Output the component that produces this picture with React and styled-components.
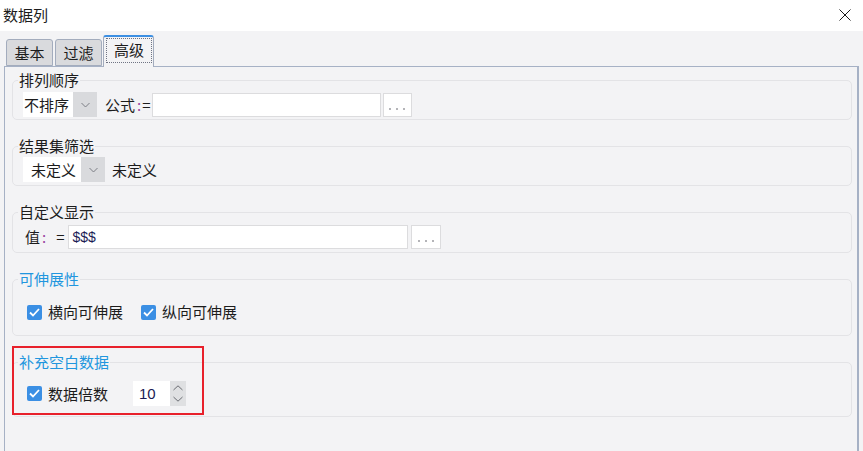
import React from 'react';
import styled, { createGlobalStyle } from 'styled-components';

const GlobalStyle = createGlobalStyle`
  html, body {
    margin: 0;
    padding: 0;
  }
  body {
    background: #f3f3f5;
    font-family: "Noto Sans CJK SC", "Noto Sans", sans-serif;
    font-size: 15px;
    color: #1c1c1c;
  }
`;

const Window = styled.div`
  width: 863px;
  height: 451px;
  overflow: hidden;
  display: flex;
  flex-direction: column;
  background: #f3f3f5;
`;

const TitleBar = styled.div`
  height: 31px;
  flex: none;
  background: #ffffff;
  display: flex;
  align-items: center;
  justify-content: space-between;
  padding: 0 12px 2px 3px;
  box-sizing: border-box;
  line-height: 20px;
`;

const CloseButton = styled.div`
  width: 12px;
  height: 12px;
  display: flex;
`;

const Content = styled.div`
  flex: 1;
  min-height: 0;
  display: flex;
  flex-direction: column;
  padding: 0 4px;
`;

const TabStrip = styled.div`
  height: 36px;
  flex: none;
  display: flex;
  align-items: flex-end;
  gap: 2px;
  padding-left: 2px;
  margin-bottom: -1px;
  position: relative;
  z-index: 1;
`;

const Tab = styled.div`
  box-sizing: border-box;
  width: ${p => (p.$active ? '51px' : '47px')};
  height: ${p => (p.$active ? '32px' : '27px')};
  margin-bottom: ${p => (p.$active ? '0' : '1px')};
  margin-left: ${p => (p.$active ? '-1px' : '0')};
  border: 1px solid #a3acbd;
  border-top: ${p => (p.$active ? '2px solid #3c8fe3' : '1px solid #a3acbd')};
  border-bottom: ${p => (p.$active ? 'none' : '1px solid #a3acbd')};
  border-radius: 3px 3px 0 0;
  background: ${p => (p.$active ? '#f3f3f5' : '#d9dadd')};
  display: flex;
  align-items: stretch;
  justify-content: center;
  line-height: 20px;
`;

const TabLabel = styled.span`
  flex: 1;
  display: flex;
  align-items: center;
  justify-content: center;
  margin: ${p => (p.$focused ? '1px 1px 4px 2px' : '0')};
  border: ${p => (p.$focused ? '1px dotted #6f7484' : 'none')};
  padding-bottom: ${p => (p.$focused ? '1px' : '0')};
`;

const Panel = styled.div`
  flex: 1;
  border: 1px solid #a6b1c5;
  border-right-width: 2px;
  border-bottom: none;
  padding: 3px 5px 0 7px;
  display: flex;
  flex-direction: column;
  gap: 16px;
`;

const GroupWrap = styled.div`
  position: relative;
`;

const Group = styled.fieldset`
  margin: 0;
  min-width: 0;
  border: 1px solid #e3e3e6;
  border-radius: 5px;
  padding: ${p => p.$pt}px 10px ${p => p.$pb}px 10px;
`;

const Legend = styled.legend`
  padding: 0 1px;
  margin-left: -5px;
  line-height: 20px;
  font-size: 15px;
  color: ${p => (p.$blue ? '#2196de' : '#1c1c1c')};
`;

const Row = styled.div`
  display: flex;
  align-items: center;
  height: ${p => p.$h || 25}px;
  padding-left: ${p => p.$pl || 0}px;
  line-height: 20px;
`;

const Select = styled.div`
  width: ${p => p.$w}px;
  height: 25px;
  display: flex;
  flex: none;
`;

const SelectValue = styled.div`
  flex: 1;
  background: #ffffff;
  display: flex;
  align-items: center;
  padding-left: ${p => p.$pl}px;
  overflow: hidden;
  white-space: nowrap;
`;

const SelectArrow = styled.div`
  width: 24px;
  background: #d9dadd;
  display: flex;
  align-items: center;
  justify-content: center;
`;

const Text = styled.span`
  margin-left: ${p => p.$ml || 0}px;
  white-space: nowrap;
  flex: none;
`;

const Colon = styled.span`
  color: #9a3fa0;
  margin: 0 ${p => p.$mr || 1}px 0 2px;
`;

const Input = styled.div`
  box-sizing: border-box;
  width: ${p => p.$w}px;
  height: 24px;
  margin-left: ${p => p.$ml || 0}px;
  background: #ffffff;
  border: 1px solid #dcdcde;
  display: flex;
  align-items: center;
  padding-left: 4px;
  font-family: "Liberation Sans", "DejaVu Sans", sans-serif;
  font-size: 14px;
  color: #1b1b55;
  flex: none;
`;

const DotsButton = styled.div`
  box-sizing: border-box;
  width: ${p => p.$w}px;
  height: 24px;
  margin-left: ${p => p.$ml}px;
  background: #ffffff;
  border: 1px solid #dcdcde;
  display: flex;
  align-items: flex-end;
  justify-content: center;
  gap: 5px;
  padding-bottom: 6px;
  flex: none;
`;

const Dot = styled.span`
  width: 2px;
  height: 2px;
  background: #b4b4b8;
`;

const Check = styled.span`
  box-sizing: border-box;
  width: 15px;
  height: 15px;
  border-radius: 2px;
  background: #3b8fe4;
  display: flex;
  align-items: center;
  justify-content: center;
  margin-left: ${p => p.$ml || 0}px;
  flex: none;
`;

const Spinner = styled.div`
  display: flex;
  height: 25px;
  margin-left: ${p => p.$ml}px;
`;

const SpinInput = styled.div`
  width: 37px;
  background: #ffffff;
  display: flex;
  align-items: center;
  padding-left: 6px;
  box-sizing: border-box;
  font-family: "Liberation Sans", "DejaVu Sans", sans-serif;
  font-size: 15px;
  color: #1b1b55;
`;

const SpinButtons = styled.div`
  width: 16px;
  background: #dfe0e2;
  display: flex;
  flex-direction: column;
  align-items: center;
  justify-content: space-around;
  padding: 2px 0;
  box-sizing: border-box;
`;

const Highlight = styled.div`
  position: absolute;
  left: 0;
  top: -6px;
  width: 192px;
  height: 69px;
  box-sizing: border-box;
  border: 2px solid #e8202b;
  pointer-events: none;
`;

const Chevron = () => (
  <svg width="9" height="6" viewBox="0 0 9 6">
    <path d="M0.5 1 L4.5 5 L8.5 1" fill="none" stroke="#7d7f85" strokeWidth="1" />
  </svg>
);

const Tick = () => (
  <svg width="11" height="9" viewBox="0 0 11 9">
    <path d="M1 4.5 L4 7.5 L10 1" fill="none" stroke="#ffffff" strokeWidth="1.8" />
  </svg>
);

const Checkbox = ({ ml }) => (
  <Check $ml={ml}>
    <Tick />
  </Check>
);

const Dots = ({ w, ml }) => (
  <DotsButton $w={w} $ml={ml}>
    <Dot />
    <Dot />
    <Dot />
  </DotsButton>
);

export default function App() {
  return (
    <>
      <GlobalStyle />
      <Window>
        <TitleBar>
          <span>数据列</span>
          <CloseButton>
            <svg width="12" height="12" viewBox="0 0 12 12">
              <path d="M0.5 0.5 L11.5 11.5 M11.5 0.5 L0.5 11.5" stroke="#1a1a1a" strokeWidth="1" />
            </svg>
          </CloseButton>
        </TitleBar>
        <Content>
          <TabStrip>
            <Tab><TabLabel>基本</TabLabel></Tab>
            <Tab><TabLabel>过滤</TabLabel></Tab>
            <Tab $active><TabLabel $focused>高级</TabLabel></Tab>
          </TabStrip>
          <Panel>
            <Group $pt={2} $pb={2}>
              <Legend>排列顺序</Legend>
              <Row>
                <Select $w={74}>
                  <SelectValue $pl={1}>不排序</SelectValue>
                  <SelectArrow><Chevron /></SelectArrow>
                </Select>
                <Text $ml={8}>公式</Text>
                <Colon>:</Colon>
                <Text>=</Text>
                <Input $w={229} $ml={1} />
                <Dots w={29} ml={2} />
              </Row>
            </Group>

            <Group $pt={1} $pb={3}>
              <Legend>结果集筛选</Legend>
              <Row>
                <Select $w={82}>
                  <SelectValue $pl={8}>未定义</SelectValue>
                  <SelectArrow><Chevron /></SelectArrow>
                </Select>
                <Text $ml={7}>未定义</Text>
              </Row>
            </Group>

            <Group $pt={2} $pb={3}>
              <Legend>自定义显示</Legend>
              <Row $pl={2}>
                <Text>值</Text>
                <Colon $mr={10}>:</Colon>
                <Text>=</Text>
                <Input $w={340} $ml={3}>$$$</Input>
                <Dots w={30} ml={3} />
              </Row>
            </Group>

            <Group $pt={12} $pb={12}>
              <Legend $blue>可伸展性</Legend>
              <Row $h={22} $pl={4}>
                <Checkbox />
                <Text $ml={6}>横向可伸展</Text>
                <Checkbox ml={18} />
                <Text $ml={6}>纵向可伸展</Text>
              </Row>
            </Group>

            <GroupWrap>
              <Group $pt={9} $pb={10}>
                <Legend $blue>补充空白数据</Legend>
                <Row $pl={4}>
                  <Checkbox />
                  <Text $ml={6}>数据倍数</Text>
                  <Spinner $ml={25}>
                    <SpinInput>10</SpinInput>
                    <SpinButtons>
                      <svg width="10" height="6" viewBox="0 0 10 6">
                        <path d="M0.5 5 L5 0.8 L9.5 5" fill="none" stroke="#6a6c72" strokeWidth="1" />
                      </svg>
                      <svg width="10" height="6" viewBox="0 0 10 6">
                        <path d="M0.5 1 L5 5.2 L9.5 1" fill="none" stroke="#6a6c72" strokeWidth="1" />
                      </svg>
                    </SpinButtons>
                  </Spinner>
                </Row>
              </Group>
              <Highlight />
            </GroupWrap>
          </Panel>
        </Content>
      </Window>
    </>
  );
}
